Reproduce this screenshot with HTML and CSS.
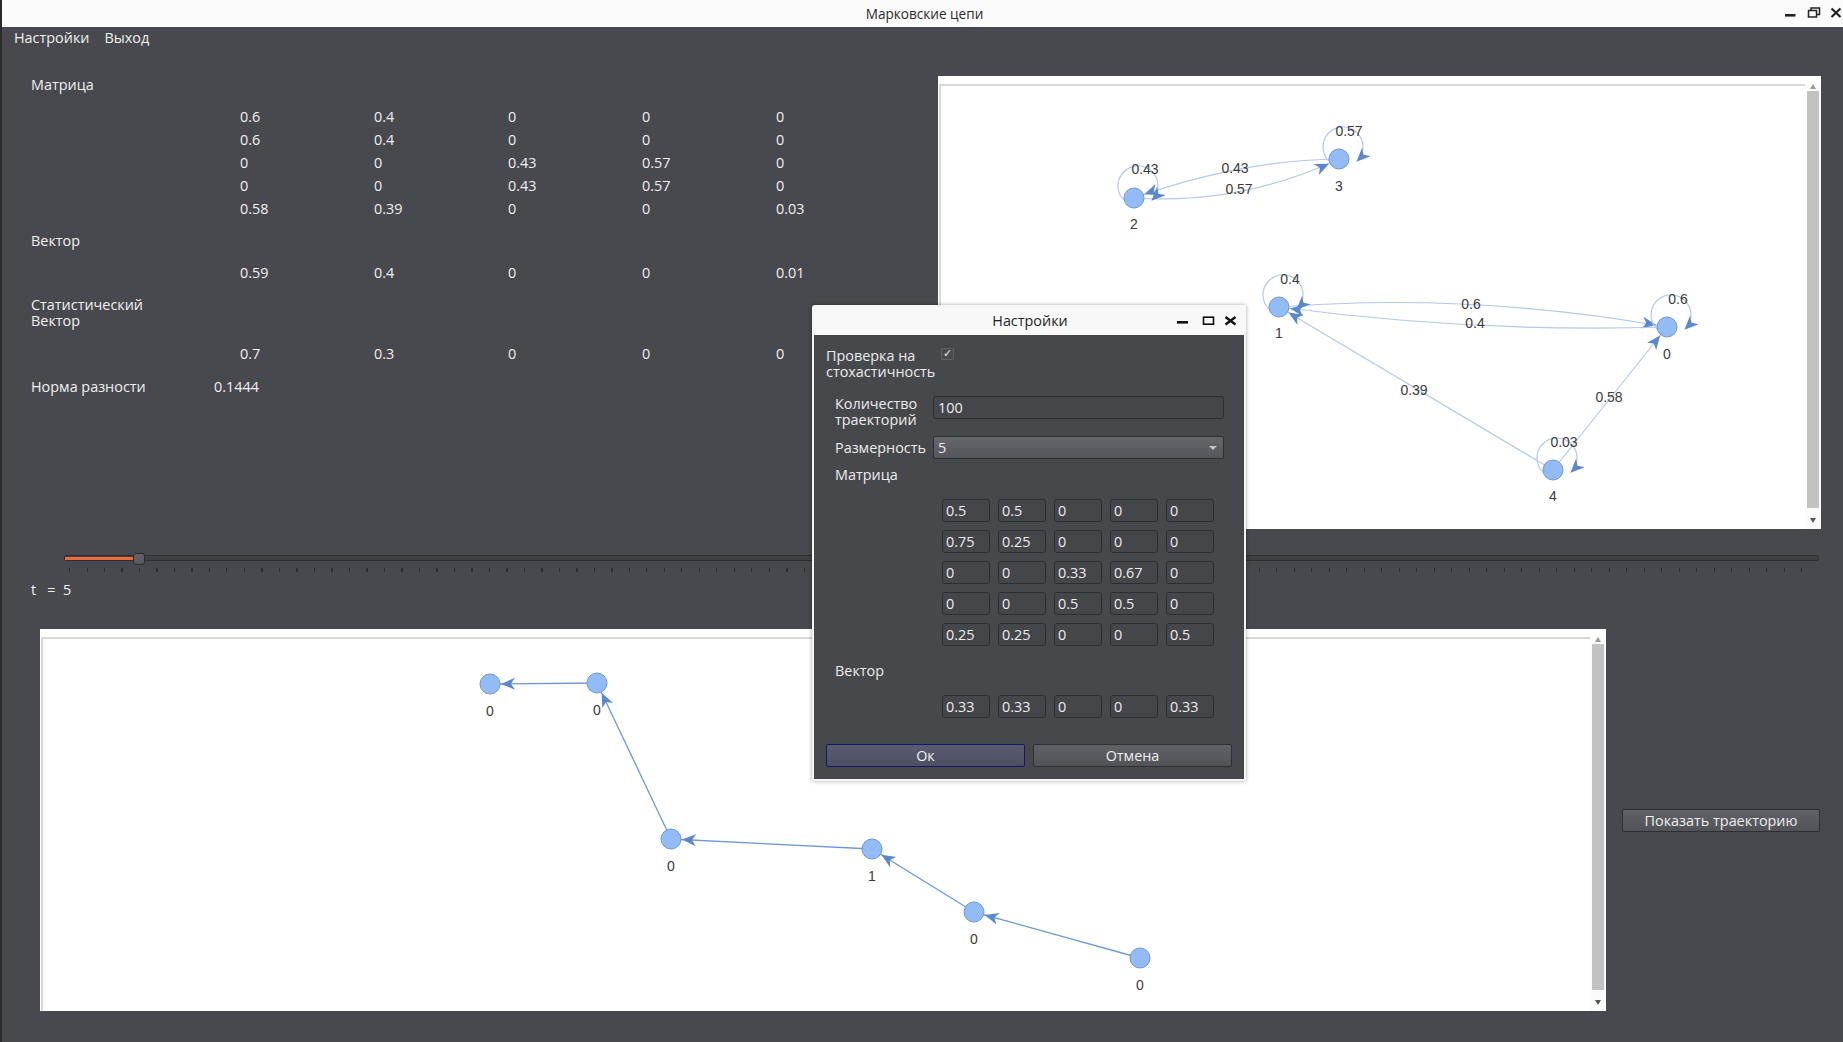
FILE: index.html
```html
<!DOCTYPE html>
<html lang="ru">
<head>
<meta charset="utf-8">
<title>Марковские цепи</title>
<link rel="stylesheet" href="styles.css">
</head>
<body>
<div class="window">
  <div class="titlebar">
    <span></span>
    <span class="title">Марковские цепи</span>
    <svg class="wm" width="60" height="27" viewBox="0 0 60 27">
      <rect x="3" y="14" width="10.5" height="2.6" fill="#222"/>
      <rect x="26.5" y="10.5" width="8" height="6.5" fill="none" stroke="#222" stroke-width="1.5"/>
      <path d="M29 10.5 V8 H37.5 V14.5 H34.5" fill="none" stroke="#222" stroke-width="1.5"/>
      <path d="M49.5 8.5 L58.5 17 M58.5 8.5 L49.5 17" stroke="#222" stroke-width="2.2"/>
    </svg>
  </div>
  <div class="menubar">
    <span class="menu-item">Настройки</span>
    <span class="menu-item">Выход</span>
  </div>
  <div class="content">
    <div class="top">
      <div class="info">
        <div class="lbl">Матрица</div>
        <div class="matrix">
          <div class="mrow"><span></span><span>0.6</span><span>0.4</span><span>0</span><span>0</span><span>0</span></div>
          <div class="mrow"><span></span><span>0.6</span><span>0.4</span><span>0</span><span>0</span><span>0</span></div>
          <div class="mrow"><span></span><span>0</span><span>0</span><span>0.43</span><span>0.57</span><span>0</span></div>
          <div class="mrow"><span></span><span>0</span><span>0</span><span>0.43</span><span>0.57</span><span>0</span></div>
          <div class="mrow"><span></span><span>0.58</span><span>0.39</span><span>0</span><span>0</span><span>0.03</span></div>
        </div>
        <div class="lbl sec-vec">Вектор</div>
        <div class="mrow vec-row"><span></span><span>0.59</span><span>0.4</span><span>0</span><span>0</span><span>0.01</span></div>
        <div class="lbl2">Статистический<br>Вектор</div>
        <div class="mrow stat-row"><span></span><span>0.7</span><span>0.3</span><span>0</span><span>0</span><span>0</span></div>
        <div class="norm"><span>Норма разности</span><span>0.1444</span></div>
      </div>
      <div class="view view-top">
        <div class="canvas">
          <svg width="864" height="443" viewBox="0 0 864 443">
            <defs>
              <marker id="ta" markerUnits="userSpaceOnUse" markerWidth="30" markerHeight="14" refX="25" refY="6" orient="auto">
                <path d="M0,0 L14,6 L0,12 L4,6 z" fill="#5b87cd"/>
              </marker>
              <marker id="tl" markerUnits="userSpaceOnUse" markerWidth="16" markerHeight="14" refX="13" refY="6" orient="auto">
                <path d="M0,0 L14,6 L0,12 L4,6 z" fill="#5b87cd"/>
              </marker>
            </defs>
            <g transform="translate(-941 -86)">
              <g class="tedge" fill="none" stroke="#b2c8ec" stroke-width="1.2">
                <path d="M1339,159 Q1240,160 1134,198" marker-end="url(#ta)"/>
                <path d="M1134,198 Q1240,205 1339,159" marker-end="url(#ta)"/>
                <path d="M1279,307 Q1470,292 1667,327" marker-end="url(#ta)"/>
                <path d="M1667,327 Q1475,333 1279,307" marker-end="url(#ta)"/>
                <path d="M1553,470 L1279,307" marker-end="url(#ta)"/>
                <path d="M1553,470 L1667,327" marker-end="url(#ta)"/>
                <path d="M1656.9,329.1 A20,20 0 1,1 1685.1,329.1" marker-end="url(#tl)"/>
                <path d="M1268.9,309.1 A20,20 0 1,1 1297.1,309.1" marker-end="url(#tl)"/>
                <path d="M1123.9,200.1 A20,20 0 1,1 1152.1,200.1" marker-end="url(#tl)"/>
                <path d="M1328.9,161.1 A20,20 0 1,1 1357.1,161.1" marker-end="url(#tl)"/>
                <path d="M1542.9,472.1 A20,20 0 1,1 1571.1,472.1" marker-end="url(#tl)"/>
              </g>
              <g fill="#93bbf5" stroke="#6e97d8" stroke-width="1">
                <circle cx="1667" cy="327" r="10"/>
                <circle cx="1279" cy="307" r="10"/>
                <circle cx="1134" cy="198" r="10"/>
                <circle cx="1339" cy="159" r="10"/>
                <circle cx="1553" cy="470" r="10"/>
              </g>
              <g class="glabel">
                <text x="1667" y="354">0</text>
                <text x="1279" y="333">1</text>
                <text x="1134" y="224">2</text>
                <text x="1339" y="186">3</text>
                <text x="1553" y="496">4</text>
                <text x="1678" y="299">0.6</text>
                <text x="1290" y="279">0.4</text>
                <text x="1145" y="169">0.43</text>
                <text x="1349" y="131">0.57</text>
                <text x="1564" y="442">0.03</text>
                <text x="1235" y="168">0.43</text>
                <text x="1239" y="189">0.57</text>
                <text x="1471" y="304">0.6</text>
                <text x="1475" y="323">0.4</text>
                <text x="1414" y="390">0.39</text>
                <text x="1609" y="397">0.58</text>
              </g>
            </g>
          </svg>
        </div>
        <div class="vscroll">
          <span class="arr-up"></span>
          <span class="thumb"></span>
          <span class="arr-down"></span>
        </div>
      </div>
    </div>
    <div class="slider">
      <div class="groove"></div>
      <div class="fill"></div>
      <div class="ticks"></div>
      <div class="handle"></div>
    </div>
    <div class="tlabel">t   =  5</div>
    <div class="bottom">
      <div class="view view-bottom">
        <div class="canvas">
          <svg width="1547" height="372" viewBox="0 0 1547 372">
            <defs>
              <marker id="ba" markerUnits="userSpaceOnUse" markerWidth="30" markerHeight="14" refX="25" refY="6" orient="auto">
                <path d="M0,0 L14,6 L0,12 L4,6 z" fill="#5b87cd"/>
              </marker>
            </defs>
            <g transform="translate(-43 -639)">
              <g fill="none" stroke="#6d96d9" stroke-width="1.3">
                <path d="M597,683 L490,684" marker-end="url(#ba)"/>
                <path d="M671,839 L597,683" marker-end="url(#ba)"/>
                <path d="M872,849 L671,839" marker-end="url(#ba)"/>
                <path d="M974,912 L872,849" marker-end="url(#ba)"/>
                <path d="M1140,958 L974,912" marker-end="url(#ba)"/>
              </g>
              <g fill="#93bbf5" stroke="#6e97d8" stroke-width="1">
                <circle cx="490" cy="684" r="10"/>
                <circle cx="597" cy="683" r="10"/>
                <circle cx="671" cy="839" r="10"/>
                <circle cx="872" cy="849" r="10"/>
                <circle cx="974" cy="912" r="10"/>
                <circle cx="1140" cy="958" r="10"/>
              </g>
              <g class="glabel">
                <text x="490" y="711">0</text>
                <text x="597" y="710">0</text>
                <text x="671" y="866">0</text>
                <text x="872" y="876">1</text>
                <text x="974" y="939">0</text>
                <text x="1140" y="985">0</text>
              </g>
            </g>
          </svg>
        </div>
        <div class="vscroll">
          <span class="arr-up"></span>
          <span class="thumb"></span>
          <span class="arr-down"></span>
        </div>
      </div>
      <div class="side">
        <button class="btn btn-traj">Показать траекторию</button>
      </div>
    </div>
  </div>
</div>

<div class="dialog">
  <div class="dlg-title">
    <span></span>
    <span class="dlg-caption">Настройки</span>
    <svg class="dlg-wm" width="70" height="30" viewBox="0 0 70 30">
      <rect x="5" y="16" width="11" height="2.6" fill="#111"/>
      <rect x="31.5" y="12.2" width="10" height="7" fill="none" stroke="#111" stroke-width="1.6"/>
      <path d="M53.5 12 L63.5 19.5 M63.5 12 L53.5 19.5" stroke="#111" stroke-width="2.4"/>
    </svg>
  </div>
  <div class="dlg-body">
    <div class="chk-row">
      <span class="chk-label">Проверка на<br>стохастичность</span>
      <span class="checkbox">✓</span>
    </div>
    <div class="form">
      <span class="flabel">Количество<br>траекторий</span>
      <div class="field">100</div>
      <span class="flabel mid">Размерность</span>
      <div class="combo"><span>5</span><span class="combo-arrow"></span></div>
      <span class="flabel">Матрица</span>
      <span></span>
    </div>
    <div class="grid-in">
      <div class="field">0.5</div><div class="field">0.5</div><div class="field">0</div><div class="field">0</div><div class="field">0</div>
      <div class="field">0.75</div><div class="field">0.25</div><div class="field">0</div><div class="field">0</div><div class="field">0</div>
      <div class="field">0</div><div class="field">0</div><div class="field">0.33</div><div class="field">0.67</div><div class="field">0</div>
      <div class="field">0</div><div class="field">0</div><div class="field">0.5</div><div class="field">0.5</div><div class="field">0</div>
      <div class="field">0.25</div><div class="field">0.25</div><div class="field">0</div><div class="field">0</div><div class="field">0.5</div>
    </div>
    <div class="vlabel">Вектор</div>
    <div class="grid-in vec-in">
      <div class="field">0.33</div><div class="field">0.33</div><div class="field">0</div><div class="field">0</div><div class="field">0.33</div>
    </div>
    <div class="dlg-actions">
      <button class="btn btn-ok">Ок</button>
      <button class="btn">Отмена</button>
    </div>
  </div>
</div>
</body>
</html>
```

FILE: styles.css
```css
* { box-sizing: border-box; }
html, body { margin: 0; padding: 0; }
body {
  width: 1843px;
  height: 1042px;
  overflow: hidden;
  background: #48494e;
  font-family: "Open Sans", "Noto Sans", sans-serif;
  font-size: 14.4px;
  color: #f0f0f0;
  position: relative;
}
.window {
  height: 1042px;
  border-left: 2px solid #2a2a2c;
  display: flex;
  flex-direction: column;
}
.titlebar {
  height: 27px;
  flex: none;
  background: #fbfbfb;
  color: #2a2a2a;
  display: grid;
  grid-template-columns: 1fr auto 1fr;
  align-items: center;
  font-size: 13.6px;
}
.titlebar .title { padding-left: 4px; }
.titlebar .wm { justify-self: end; margin-right: 1px; display: block; }
.menubar {
  height: 22px;
  flex: none;
  display: flex;
  align-items: center;
  padding: 0 0 2px 12px;
  gap: 15px;
}
.content { flex: 1; display: flex; flex-direction: column; }
.top { display: flex; height: 480px; flex: none; }
.info { width: 936px; padding: 24px 0 0 29px; }
.lbl { height: 23px; line-height: 23px; }
.matrix { margin-top: 9px; }
.mrow {
  display: grid;
  grid-template-columns: 209px repeat(5, 134px);
  height: 23px;
  line-height: 23px;
}
.sec-vec { margin-top: 9px; }
.vec-row { margin-top: 9px; }
.lbl2 { margin-top: 13px; line-height: 16px; }
.stat-row { margin-top: 13px; }
.norm {
  margin-top: 10px;
  display: grid;
  grid-template-columns: 183px auto;
  height: 23px;
  line-height: 23px;
}
.view {
  background: #fff;
  padding: 8px 0 0 1px;
  display: flex;
}
.view-top { margin-top: 27px; width: 883px; height: 453px; }
.canvas {
  flex: 1;
  border-top: 2px solid #d8d8d8;
  border-left: 2px solid #d8d8d8;
  overflow: hidden;
}
.canvas svg { display: block; }
.glabel text {
  font-family: "Liberation Sans", Arial, sans-serif;
  font-size: 14px;
  fill: #3a3a3a;
  text-anchor: middle;
  dominant-baseline: central;
}
.vscroll {
  width: 16px;
  display: flex;
  flex-direction: column;
  align-items: center;
  background: #fbfbfb;
}
.arr-up, .arr-down { display: flex; justify-content: center; width: 100%; }
.arr-up { height: 7px; align-items: flex-start; }
.arr-down { height: 21px; align-items: center; }
.arr-up::before {
  content: "";
  border-left: 3.5px solid transparent;
  border-right: 3.5px solid transparent;
  border-bottom: 5px solid #9a9a9a;
}
.arr-down::before {
  content: "";
  border-left: 3.5px solid transparent;
  border-right: 3.5px solid transparent;
  border-top: 5px solid #555;
  margin-top: 3px;
}
.thumb { flex: 1; width: 12px; background: #c2c2c2; }
.slider {
  position: relative;
  height: 30px;
  margin: 16px 24px 0 62px;
  flex: none;
}
.groove {
  position: absolute;
  left: 0; right: 0;
  top: 10px;
  height: 6px;
  background: #3f4044;
  border: 1px solid #2e2f33;
  border-radius: 2px;
}
.fill {
  position: absolute;
  left: 1px;
  width: 70px;
  top: 12px;
  height: 3px;
  background: #f26a3a;
}
.ticks {
  position: absolute;
  left: 5px; right: 2px;
  top: 23px;
  height: 4px;
  background: repeating-linear-gradient(90deg, #2c2d31 0 1px, transparent 1px 17.5px);
}
.handle {
  position: absolute;
  left: 69px;
  top: 8px;
  width: 12px;
  height: 12px;
  background: linear-gradient(#64656a, #57585d);
  border: 1px solid #2a2b2f;
  border-radius: 3px;
}
.tlabel {
  margin-top: 5px;
  padding-left: 29px;
  height: 20px;
  line-height: 20px;
  white-space: pre;
  flex: none;
}
.bottom { display: flex; margin-top: 29px; height: 382px; flex: none; }
.view-bottom { margin-left: 38px; width: 1566px; height: 382px; }
.side { flex: 1; display: flex; align-items: center; padding-left: 16px; }
.btn {
  font-family: "Open Sans", "Noto Sans", sans-serif;
  font-size: 14.4px;
  color: #eeeeee;
  height: 23px;
  padding: 0;
  background: linear-gradient(#616267, #525358);
  border: 1px solid #2f3034;
  border-radius: 2px;
  flex: none;
}
.btn-traj { width: 198px; }

/* dialog */
.dialog {
  position: absolute;
  left: 812px;
  top: 305px;
  width: 434px;
  height: 476px;
  box-shadow: 0 0 4px rgba(0, 0, 0, 0.35);
}
.dlg-title {
  height: 30px;
  background: #f8f8f8;
  color: #1e1e1e;
  display: grid;
  grid-template-columns: 1fr auto 1fr;
  align-items: center;
  border-radius: 3px 3px 0 0;
}
.dlg-caption { padding-left: 2px; }
.dlg-wm { justify-self: end; margin-right: 4px; display: block; }
.dlg-body {
  height: 446px;
  background: #47484c;
  border: 2px solid #f4f4f4;
  border-top: 0;
  padding: 13px 0 12px 12px;
  color: #ececec;
}
.chk-row { display: flex; height: 32px; line-height: 16px; }
.chk-label { width: 115px; }
.checkbox {
  width: 13px;
  height: 12px;
  background: #4a4b4f;
  border: 1px solid #606166;
  border-radius: 1px;
  font-family: "DejaVu Sans", sans-serif;
  font-size: 11px;
  font-weight: bold;
  line-height: 10px;
  text-align: center;
  color: #e8e8e8;
  overflow: visible;
}
.form {
  margin: 16px 0 0 9px;
  display: grid;
  grid-template-columns: 98px 291px;
  row-gap: 8px;
  line-height: 16px;
}
.flabel.mid { align-self: center; }
.field {
  height: 23px;
  background: #45464a;
  border: 1px solid #2d2e32;
  border-radius: 3px;
  padding-left: 3px;
  line-height: 21px;
  color: #ececec;
}
.form .field { padding-left: 4px; }
.combo {
  height: 23px;
  background: linear-gradient(#66676c, #55565b);
  border: 1px solid #2d2e32;
  border-radius: 2px;
  padding: 0 6px 0 4px;
  line-height: 21px;
  display: flex;
  justify-content: space-between;
  align-items: center;
}
.combo-arrow {
  border-left: 4px solid transparent;
  border-right: 4px solid transparent;
  border-top: 4px solid #c4c4c4;
}
.grid-in {
  margin: 16px 0 0 116px;
  display: grid;
  grid-template-columns: repeat(5, 48px);
  grid-auto-rows: 23px;
  gap: 8px;
}
.vlabel { margin: 17px 0 0 9px; line-height: 16px; }
.dlg-actions { margin-top: 26px; display: flex; gap: 8px; }
.dlg-actions .btn { width: 199px; }
.btn-ok {
  background: linear-gradient(#5a5d72, #4d5065);
  border-color: #16166c;
}
```
